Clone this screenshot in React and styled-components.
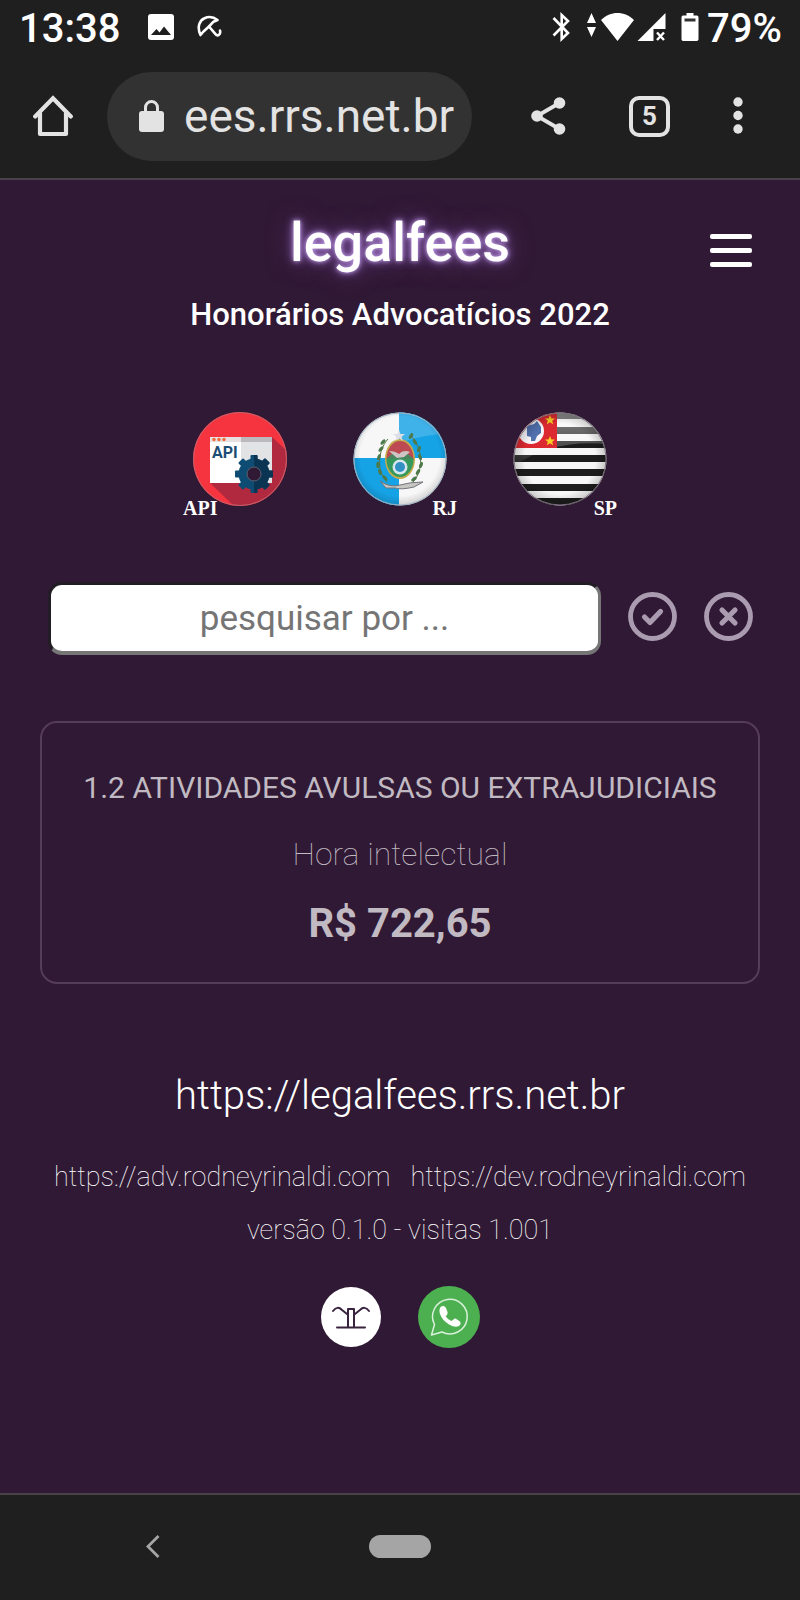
import React from "react";
import styled, { createGlobalStyle } from "styled-components";

const GlobalStyle = createGlobalStyle`
  *, *::before, *::after { box-sizing: border-box; }
  body {
    margin: 0;
    background: #301934;
    color: #fff;
    font-family: Roboto, "Noto Sans", sans-serif;
  }
  h1, h2, p { margin: 0; }
  svg { display: block; }
`;

const Screen = styled.div`
  min-height: 100vh;
  display: flex;
  flex-direction: column;
`;

const Chrome = styled.header`
  background: #1f1f1f;
  border-bottom: 2px solid #494149;
`;

const StatusBar = styled.div`
  display: flex;
  justify-content: space-between;
  height: 58px;
  padding: 0 18px 0 19px;
`;

const StatusGroup = styled.div`
  display: flex;
  align-items: center;
  gap: ${(p) => p.$gap}px;
`;

const StatusText = styled.span`
  font-size: 40px;
  line-height: 58px;
  font-weight: 500;
`;

const StatusIcons = styled.div`
  display: flex;
  align-items: center;
  height: 54px;
  align-self: flex-start;
  gap: ${(p) => p.$gap}px;
`;

const AddressBar = styled.div`
  display: flex;
  align-items: center;
  height: 120px;
  padding: 0 57px 4px 33px;
`;

const IconButton = styled.button`
  display: flex;
  align-items: center;
  justify-content: center;
  flex: none;
  padding: 0;
  border: 0;
  background: none;
  color: #e3e3e3;
  cursor: pointer;
`;

const UrlPill = styled.div`
  flex: 1;
  min-width: 0;
  display: flex;
  align-items: center;
  gap: 20px;
  height: 89px;
  margin-left: 34px;
  padding: 0 12px 0 32px;
  border-radius: 45px;
  background: #323232;
  color: #e3e3e3;
`;

const UrlInput = styled.input`
  flex: 1;
  min-width: 0;
  width: 100%;
  padding: 0;
  border: 0;
  outline: 0;
  background: none;
  color: inherit;
  font: 400 46px/56px Roboto, sans-serif;
`;

const BrowserActions = styled.div`
  display: flex;
  align-items: center;
  gap: 63px;
  margin-left: 59px;
`;

const TabCount = styled.span`
  display: flex;
  align-items: center;
  justify-content: center;
  width: 41px;
  height: 41px;
  border: 4px solid #e3e3e3;
  border-radius: 10px;
  font: 700 26px/32px Roboto, sans-serif;
`;

const Page = styled.main`
  flex: 1;
  display: flex;
  flex-direction: column;
  padding: 31px 0 40px;
  text-align: center;
`;

const TitleRow = styled.div`
  display: grid;
  grid-template-columns: 1fr auto 1fr;
  padding: 0 48px;
`;

const Title = styled.h1`
  grid-column: 2;
  font-size: 54px;
  line-height: 64px;
  font-weight: 500;
  text-shadow: 0 0 4px #c9a8ee, 0 0 10px #a678d4, 0 0 26px #6a4088;
`;

const MenuButton = styled(IconButton)`
  height: 48px;
  align-self: end;
  justify-self: end;
`;

const Subtitle = styled.h2`
  margin-top: 20px;
  font-size: 31px;
  line-height: 40px;
  font-weight: 500;
`;

const Badges = styled.nav`
  display: flex;
  justify-content: center;
  gap: 66px;
  margin-top: 77px;
`;

const Badge = styled.a`
  position: relative;
  width: 94px;
  height: 94px;
  color: #fff;
  text-decoration: none;
`;

const BadgeLabel = styled.span`
  position: absolute;
  bottom: -12px;
  ${(p) => (p.$side === "left" ? "left" : "right")}: -10px;
  font: 700 20px/20px "Liberation Serif", serif;
`;

const SearchRow = styled.form`
  display: flex;
  align-items: flex-start;
  gap: 27px;
  margin: 76px 47px 0 48px;
`;

const SearchInput = styled.input`
  flex: 1;
  min-width: 0;
  height: 73px;
  padding: 0 16px;
  border: 3px solid;
  border-color: #221d24 #767676 #767676 #221d24;
  border-bottom-width: 4px;
  border-radius: 14px;
  background: #fff;
  color: #222;
  font: 400 35px/44px Roboto, sans-serif;
  text-align: center;
  &::placeholder { color: #757575; opacity: 1; }
`;

const SearchButton = styled(IconButton)`
  height: 69px;
  color: #ab9bb0;
`;

const Card = styled.article`
  display: flex;
  flex-direction: column;
  gap: 26px;
  margin: 66px 40px 0;
  padding: 45px 16px 34px;
  border: 2px solid #553c59;
  border-radius: 17px;
  color: #c1bac2;
`;

const CardTitle = styled.h2`
  font-size: 30px;
  line-height: 40px;
  font-weight: 400;
`;

const CardDetail = styled.p`
  font-size: 32px;
  line-height: 40px;
  font-weight: 100;
`;

const CardPrice = styled.p`
  font-size: 40px;
  line-height: 48px;
  font-weight: 700;
`;

const Footer = styled.footer`
  display: flex;
  flex-direction: column;
  align-items: center;
  margin-top: 88px;
`;

const SiteLink = styled.a`
  color: #fff;
  font-size: ${(p) => (p.$main ? 40 : 27)}px;
  line-height: ${(p) => (p.$main ? 48 : 32)}px;
  font-weight: ${(p) => (p.$main ? 300 : 100)};
  text-decoration: none;
`;

const SiteLinks = styled.div`
  display: flex;
  gap: 20px;
  margin-top: 41px;
`;

const Version = styled.p`
  margin-top: 21px;
  font-size: 27px;
  line-height: 32px;
  font-weight: 100;
`;

const Social = styled.div`
  display: flex;
  align-items: center;
  gap: 37px;
  margin-top: 40px;
`;

const SystemNav = styled.nav`
  display: grid;
  grid-template-columns: repeat(3, 1fr);
  align-items: center;
  justify-items: center;
  height: 107px;
  padding: 0 30px 2px;
  border-top: 2px solid #494149;
  background: #1f1f1f;
`;

const HomePill = styled.button`
  width: 62px;
  height: 23px;
  padding: 0;
  border: 0;
  border-radius: 12px;
  background: #a5a5a5;
`;

function ImageIcon() {
  return (
    <svg width="26" height="26" viewBox="0 0 26 26">
      <rect width="26" height="26" rx="3" fill="#fff" />
      <path d="M3 21 8.500 15 11.500 18.500 16 12.500 23 21Z" fill="#1f1f1f" />
    </svg>
  );
}

function UmbrellaIcon() {
  return (
    <svg width="25" height="24" viewBox="0 0 25 24" fill="none" stroke="#fff" strokeWidth="2.600" strokeLinecap="round" strokeLinejoin="round">
      <path d="M3.500 20C-.5 11.500 3 5 7.500 3.200 12 1.200 17 2.300 20.500 5L16.500 6.700 12 11.500 6.500 16.500Z" />
      <path d="M12 11.500 18.500 19.200C20.500 21.600 24 20 23 15.500" />
    </svg>
  );
}

function BluetoothIcon() {
  return (
    <svg width="19" height="30" viewBox="0 0 19 30" fill="none" stroke="#fff" strokeWidth="2.600">
      <path d="M1.500 6 16 21 9.700 27V3L16 9 1.500 23.500" />
    </svg>
  );
}

function WifiIcon() {
  return (
    <svg width="49" height="30" viewBox="0 0 49 30" fill="#fff">
      <path d="M5.500 1 10 11H1ZM1 15H10L5.500 25Z" />
      <path d="M15 8C24-1.500 39-1.500 48 8L31.500 29Z" />
    </svg>
  );
}

function SignalIcon() {
  return (
    <svg width="29" height="30" viewBox="0 0 29 30">
      <path d="M28.500 1V17H16.500V29H.5Z" fill="#fff" />
      <path d="M20 20.500 27 28M27 20.500 20 28" stroke="#fff" strokeWidth="2.400" />
    </svg>
  );
}

function BatteryIcon() {
  return (
    <svg width="18" height="30" viewBox="0 0 18 30">
      <path d="M5.500 1H12.500V3.500H16A2 2 0 0 1 17.500 5V27.500A2 2 0 0 1 16 29H2A2 2 0 0 1 .5 27.500V5A2 2 0 0 1 2 3.500H5.500Z" fill="#fff" />
      <path d="M3.500 6.500H14.500V9.500H3.500Z" fill="#333" />
    </svg>
  );
}

function HomeIcon() {
  return (
    <svg width="40" height="42" viewBox="0 0 40 42" fill="none" stroke="currentColor" strokeWidth="4.200" strokeLinejoin="round" strokeLinecap="round">
      <path d="M2.200 21.500 20 3.200 37.800 21.500" strokeLinejoin="miter" />
      <path d="M7 18V39H33V18" />
    </svg>
  );
}

function LockIcon() {
  return (
    <svg width="25" height="34" viewBox="0 0 25 34">
      <rect y="12" width="25" height="21" rx="3" fill="#e3e3e3" />
      <path d="M6.500 13V8.500a6 6 0 0 1 12 0V13" fill="none" stroke="#e3e3e3" strokeWidth="3" />
    </svg>
  );
}

function ShareIcon() {
  return (
    <svg width="35" height="38" viewBox="0 0 35 38">
      <path d="M28.500 6 6 19 28.500 32" fill="none" stroke="currentColor" strokeWidth="3.800" />
      <g fill="currentColor">
        <circle cx="28.500" cy="6" r="5.800" />
        <circle cx="6" cy="19" r="5.800" />
        <circle cx="28.500" cy="32" r="5.800" />
      </g>
    </svg>
  );
}

function DotsIcon() {
  return (
    <svg width="10" height="38" viewBox="0 0 10 38" fill="currentColor">
      <circle cx="5" cy="5" r="4.700" />
      <circle cx="5" cy="18.500" r="4.700" />
      <circle cx="5" cy="32" r="4.700" />
    </svg>
  );
}

function MenuIcon() {
  return (
    <svg width="42" height="34" viewBox="0 0 42 34" fill="#fff">
      <rect width="42" height="5" rx="2" />
      <rect y="14" width="42" height="5" rx="2" />
      <rect y="28" width="42" height="5" rx="2" />
    </svg>
  );
}

function ApiBadge() {
  const teeth = [0, 45, 90, 135, 180, 225, 270, 315];
  return (
    <svg width="94" height="94" viewBox="0 0 94 94" aria-hidden="true">
      <defs>
        <clipPath id="apiDisc"><circle cx="47" cy="47" r="47" /></clipPath>
        <clipPath id="apiGearRight"><path d="M61 30H90V94H61Z" /></clipPath>
      </defs>
      <g clipPath="url(#apiDisc)">
        <rect width="94" height="94" fill="#f5343f" />
        <path d="M79 25 94 39V94H41L17 71Z" fill="#b0293f" />
        <path d="M17 25H79V71H17Z" fill="#fff" />
        <path d="M48 25H79V71H60L48 58Z" fill="#e2e3e5" />
        <path d="M17 25H48V30H17Z" fill="#e6e1e0" />
        <path d="M48 25H79V30H48Z" fill="#bcb9be" />
        <g fill="#f06a3c">
          <circle cx="21" cy="27.500" r="1.700" />
          <circle cx="26" cy="27.500" r="1.700" />
          <circle cx="31" cy="27.500" r="1.700" />
        </g>
        <text x="19" y="46" fill="#1d4d75" fontFamily="Roboto, sans-serif" fontWeight="700" fontSize="16">API</text>
        {["#0e4c73", "#0b3453"].map((fill, i) => (
          <g key={fill} fill={fill} clipPath={i ? "url(#apiGearRight)" : undefined}>
            <circle cx="61" cy="62" r="15.500" />
            {teeth.map((a) => (
              <rect key={a} x="57.500" y="43" width="7" height="8" rx="1" transform={`rotate(${a} 61 62)`} />
            ))}
          </g>
        ))}
        <circle cx="61" cy="62" r="7" fill="#301934" stroke="#5d6170" strokeWidth="1" />
      </g>
      <circle cx="47" cy="47" r="46.500" fill="none" stroke="#c4626c" strokeWidth="1" />
    </svg>
  );
}

function RioBadge() {
  const leaves = [
    [30, 30, 40], [28, 37, 40], [26, 45, 20], [25, 53, 0], [27, 60, -20], [32, 66, -40],
    [58, 24, 30], [62, 30, -30], [66, 37, 20], [67, 45, -20], [68, 53, 20], [65, 60, 30], [61, 67, 50],
  ];
  return (
    <svg width="94" height="94" viewBox="0 0 94 94" aria-hidden="true">
      <defs>
        <clipPath id="rjDisc"><circle cx="47" cy="47" r="46.500" /></clipPath>
        <clipPath id="rjShield"><ellipse cx="47" cy="47" rx="13.500" ry="18" /></clipPath>
        <radialGradient id="rjShade" cx="50%" cy="47%" r="54%">
          <stop offset="78%" stopColor="#000" stopOpacity="0" />
          <stop offset="100%" stopColor="#000" stopOpacity=".18" />
        </radialGradient>
      </defs>
      <g clipPath="url(#rjDisc)">
        <rect width="94" height="94" fill="#f7f7f8" />
        <path d="M46 0H94V46H46ZM0 46H46V94H0Z" fill="#16a3e6" />
        <path d="M46 0H94V22Q72 22 46 31Z" fill="#3fb2ea" />
        <g fill="#4b7b4b">
          {leaves.map(([x, y, a]) => (
            <ellipse key={`${x}-${y}`} cx={x} cy={y} rx="1.700" ry="3.200" transform={`rotate(${a} ${x} ${y})`} />
          ))}
        </g>
        <path d="M35 27C25 38 23 58 34 70M58 24C70 36 71 58 60 70" fill="none" stroke="#557446" strokeWidth="1" />
        <ellipse cx="47" cy="47" rx="15" ry="20" fill="#c5ab4b" />
        <g clipPath="url(#rjShield)">
          <rect x="30" y="25" width="34" height="22" fill="#bd4a52" />
          <path d="M33 47 39 42H55L61 47Z" fill="#4b8560" />
          <rect x="30" y="47" width="34" height="22" fill="#35995c" />
        </g>
        <path d="M36 39Q42 39 46 42Q50 37 57 40L51 45 44 46Z" fill="#cfc4c4" />
        <circle cx="47" cy="55" r="7.500" fill="#d8e7ee" />
        <circle cx="47" cy="55" r="5" fill="#3390c3" />
        <path d="M27 69Q37 76 47 73T70 70L61 75Q48 78 42 76L33 76Z" fill="#c6c6c2" stroke="#72747a" strokeWidth="1" />
        <path d="M46 18 47.500 22H52L48.500 25 50 29 46 26 42 29 43.500 25 40 22H44.500Z" fill="#dcdde5" />
        <rect width="94" height="94" fill="url(#rjShade)" />
      </g>
      <circle cx="47" cy="47" r="46" fill="none" stroke="#9cb4c4" strokeWidth="1" />
    </svg>
  );
}

function SaoPauloBadge() {
  const star = "M0-5 1.400-1.600 5-1.600 2.200.7 3.200 4.300 0 2.200-3.200 4.300-2.200.7-5-1.600-1.400-1.600Z";
  return (
    <svg width="94" height="94" viewBox="0 0 94 94" aria-hidden="true">
      <defs>
        <clipPath id="spDisc"><circle cx="47" cy="47" r="46.500" /></clipPath>
        <linearGradient id="spGloss" x1="0" y1="0" x2="0" y2="1">
          <stop offset="0" stopColor="#fff" stopOpacity=".5" />
          <stop offset="1" stopColor="#fff" stopOpacity=".03" />
        </linearGradient>
        <radialGradient id="spShade">
          <stop offset="75%" stopColor="#000" stopOpacity="0" />
          <stop offset="100%" stopColor="#000" stopOpacity=".2" />
        </radialGradient>
      </defs>
      <g clipPath="url(#spDisc)">
        <rect width="94" height="94" fill="#f6f6f6" />
        {[0, 15, 29, 43, 57, 72, 86].map((y) => (
          <rect key={y} y={y} width="94" height="7" fill="#1c1c1c" />
        ))}
        <path d="M0 0H94V32Q38 27 0 55Z" fill="url(#spGloss)" />
        <rect width="44" height="36" fill="#dc2931" />
        <circle cx="18" cy="19" r="13" fill="#f7f6fa" />
        <path d="M14 14 21 12 24 9 28 15 28 21 24 24 22 29 18 29 18 25 14 24Z" fill="#5070ae" />
        <path d={star} transform="translate(37 8)" fill="#f7cf26" />
        <path d={star} transform="translate(37 29)" fill="#f7cf26" />
        <rect width="94" height="94" fill="url(#spShade)" />
      </g>
      <circle cx="47" cy="47" r="46" fill="none" stroke="#7d747f" strokeWidth="1" />
    </svg>
  );
}

function RoundAction({ path }) {
  return (
    <svg width="49" height="49" viewBox="0 0 49 49" fill="none" stroke="currentColor" strokeLinecap="round" strokeLinejoin="round">
      <circle cx="24.500" cy="24.500" r="22" strokeWidth="4.800" />
      <path d={path} strokeWidth="5.200" />
    </svg>
  );
}

function FirmIcon() {
  return (
    <svg width="60" height="60" viewBox="0 0 60 60">
      <circle cx="30" cy="30" r="30" fill="#fff" />
      <g fill="none" stroke="#3a233e" strokeWidth="2" strokeLinecap="round" strokeLinejoin="round">
        <path d="M12 24C15 20 18 20 21 23L26 27M48 24C45 20 42 20 39 23L34 27" />
        <path d="M27 40V22H33V40M16 40.500H44" />
      </g>
    </svg>
  );
}

function WhatsIcon() {
  return (
    <svg width="62" height="62" viewBox="0 0 62 62">
      <circle cx="31" cy="31" r="31" fill="#4caf50" />
      <path d="M13.500 49 16.500 38.500A17.300 17.300 0 1 1 24 46Z" fill="none" stroke="#d9f1da" strokeWidth="1.500" strokeLinejoin="round" />
      <path d="M23 20.500Q26.500 19 28 22L29.500 26Q30 29 27.500 30 29.500 33.500 33.500 35L36 33Q37.500 32 39 33.500L42 35.500Q43.500 38 41 40 37 42 31 38.500 24 34 22 28 20.500 23 23 20.500Z" fill="#fff" />
    </svg>
  );
}

function BackIcon() {
  return (
    <svg width="14" height="23" viewBox="0 0 14 23" fill="none" stroke="#a5a5a5" strokeWidth="2.800">
      <path d="M12.500 1 2 11.500 12.500 22" />
    </svg>
  );
}

export default function App() {
  return (
    <Screen>
      <GlobalStyle />
      <Chrome>
        <StatusBar>
          <StatusGroup $gap={28}>
            <StatusText>13:38</StatusText>
            <StatusIcons $gap={23}>
              <ImageIcon />
              <UmbrellaIcon />
            </StatusIcons>
          </StatusGroup>
          <StatusGroup $gap={8}>
            <StatusIcons $gap={15}>
              <BluetoothIcon />
              <StatusIcons $gap={2}>
                <WifiIcon />
                <SignalIcon />
              </StatusIcons>
              <BatteryIcon />
            </StatusIcons>
            <StatusText>79%</StatusText>
          </StatusGroup>
        </StatusBar>
        <AddressBar>
          <IconButton aria-label="Início"><HomeIcon /></IconButton>
          <UrlPill>
            <LockIcon />
            <UrlInput aria-label="Endereço" defaultValue="ees.rrs.net.br" />
          </UrlPill>
          <BrowserActions>
            <IconButton aria-label="Compartilhar"><ShareIcon /></IconButton>
            <IconButton aria-label="Abas"><TabCount>5</TabCount></IconButton>
            <IconButton aria-label="Mais opções"><DotsIcon /></IconButton>
          </BrowserActions>
        </AddressBar>
      </Chrome>

      <Page>
        <TitleRow>
          <Title>legalfees</Title>
          <MenuButton aria-label="Menu"><MenuIcon /></MenuButton>
        </TitleRow>
        <Subtitle>Honorários Advocatícios 2022</Subtitle>

        <Badges>
          <Badge href="#api"><ApiBadge /><BadgeLabel $side="left">API</BadgeLabel></Badge>
          <Badge href="#rj"><RioBadge /><BadgeLabel>RJ</BadgeLabel></Badge>
          <Badge href="#sp"><SaoPauloBadge /><BadgeLabel>SP</BadgeLabel></Badge>
        </Badges>

        <SearchRow onSubmit={(e) => e.preventDefault()}>
          <SearchInput aria-label="Pesquisar" placeholder="pesquisar por ..." />
          <SearchButton type="submit" aria-label="Confirmar">
            <RoundAction path="M16.500 25 22 30.500 32.500 19.500" />
          </SearchButton>
          <SearchButton type="reset" aria-label="Limpar">
            <RoundAction path="M18 18 31 31M31 18 18 31" />
          </SearchButton>
        </SearchRow>

        <Card>
          <CardTitle>1.2 ATIVIDADES AVULSAS OU EXTRAJUDICIAIS</CardTitle>
          <CardDetail>Hora intelectual</CardDetail>
          <CardPrice>R$ 722,65</CardPrice>
        </Card>

        <Footer>
          <SiteLink $main href="#legalfees">https://legalfees.rrs.net.br</SiteLink>
          <SiteLinks>
            <SiteLink href="#adv">https://adv.rodneyrinaldi.com</SiteLink>
            <SiteLink href="#dev">https://dev.rodneyrinaldi.com</SiteLink>
          </SiteLinks>
          <Version>versão 0.1.0 - visitas 1.001</Version>
          <Social>
            <a href="#firm" aria-label="Escritório"><FirmIcon /></a>
            <a href="#whatsapp" aria-label="WhatsApp"><WhatsIcon /></a>
          </Social>
        </Footer>
      </Page>

      <SystemNav>
        <IconButton aria-label="Voltar"><BackIcon /></IconButton>
        <HomePill aria-label="Tela inicial" />
      </SystemNav>
    </Screen>
  );
}
